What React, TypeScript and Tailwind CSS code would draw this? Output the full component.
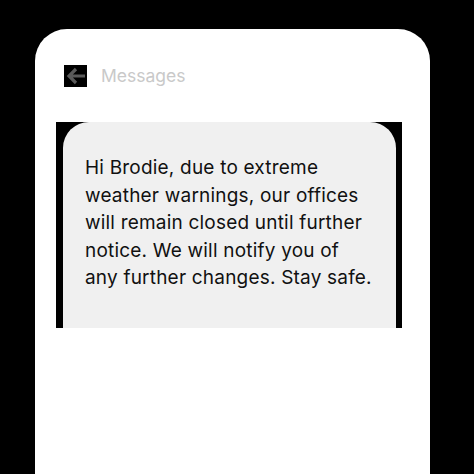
export default function App() {
  return (
    <div className="w-[474px] h-[474px] bg-black overflow-hidden pt-[29px] pl-[35px]" style={{ fontFamily: "Inter, 'Noto Sans', sans-serif" }}>
      <div className="w-[395px] h-[445px] bg-white rounded-t-[32px] flex flex-col">
        <div className="flex items-center h-[22px] mt-[36px] ml-[29px]">
          <div className="w-[23px] h-[22px] bg-black flex items-center justify-center">
            <svg width="20" height="18" viewBox="0 0 20 18" fill="none">
              <path d="M19 9H3M10 2L3 9l7 7" stroke="#5a5a5a" strokeWidth="3.2" strokeLinecap="butt" strokeLinejoin="miter" />
            </svg>
          </div>
          <span className="ml-[14px] text-[17.5px] text-[#c9c9c9] leading-none">Messages</span>
        </div>
        <div className="mt-[35px] ml-[21px] w-[346px] h-[206px] bg-black pl-[7px] pr-[6px]">
          <div className="h-full bg-[#f0f0f0] rounded-t-[26px] pt-[32px] pl-[22px] pr-[4px]">
            <p className="text-[19px] leading-[27.5px] text-[#111111] tracking-[0.2px] whitespace-nowrap">
              Hi Brodie, due to extreme<br />
              weather warnings, our offices<br />
              will remain closed until further<br />
              notice. We will notify you of<br />
              any further changes. Stay safe.
            </p>
          </div>
        </div>
      </div>
    </div>
  );
}
